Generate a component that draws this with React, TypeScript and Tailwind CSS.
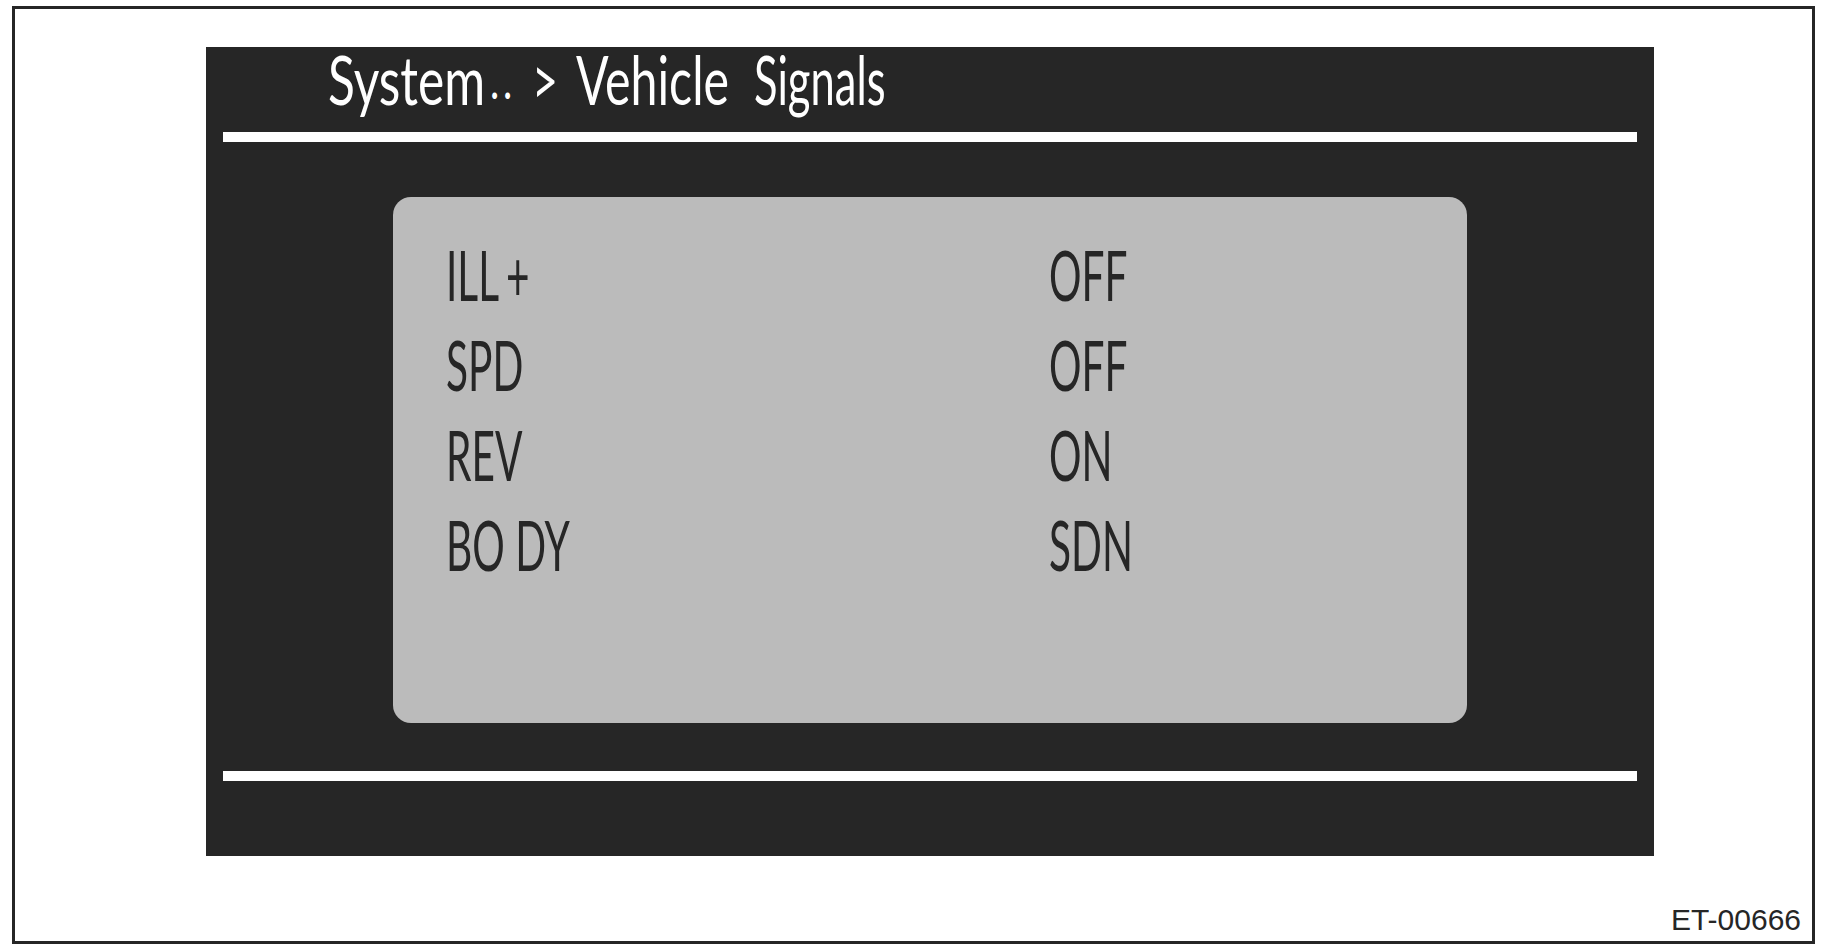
import React from 'react';

const rows = [
  { label: 'ILL', extra: '+', value: 'OFF' },
  { label: 'SPD', value: 'OFF' },
  { label: 'REV', value: 'ON' },
  { label: 'BO DY', value: 'SDN' },
];

export default function App() {
  return (
    <div className="w-[1827px] h-[951px] bg-white pt-[6px] pl-[12px] font-['Lato',sans-serif]">
      {/* Figure frame */}
      <div className="w-[1803px] h-[938px] border-[3px] border-[#262626] flex flex-col">
        {/* Screen */}
        <div className="ml-[191px] mt-[38px] w-[1448px] h-[809px] bg-[#262626] flex flex-col">
          {/* Breadcrumb title */}
          <div className="h-[64px] pl-[122px] flex items-start text-white text-[68px] leading-[64px] whitespace-nowrap">
            <div className="w-[162px]">
              <span className="block origin-left scale-x-[0.73]">System</span>
            </div>
            <div className="w-[42px]">
              <span className="block origin-left scale-x-[0.75] text-[52px] tracking-[5px]">..</span>
            </div>
            <div className="w-[44px]">
              <span className="block origin-left scale-x-[0.66]">&gt;</span>
            </div>
            <div className="w-[178px]">
              <span className="block origin-left scale-x-[0.71]">Vehicle</span>
            </div>
            <div className="w-[200px]">
              <span className="block origin-left scale-x-[0.64]">Signals</span>
            </div>
          </div>
          <div className="mt-[21px] mx-[17px] h-[10px] bg-white" />

          {/* Signal list */}
          <div className="mt-[55px] mx-[187px] h-[526px] rounded-[18px] bg-[#bbbbbb] pt-[32px] pl-[53px]">
            {rows.map((row) => (
              <div key={row.label} className="grid grid-cols-[603px_1fr] h-[90px] text-[70px] leading-[90px] text-[#262626]">
                <span className="block whitespace-nowrap origin-left scale-x-[0.58]">
                  {row.label}
                  {row.extra && <span className="ml-[12px]">{row.extra}</span>}
                </span>
                <span className="block whitespace-nowrap origin-left scale-x-[0.58]">{row.value}</span>
              </div>
            ))}
          </div>

          <div className="mt-[48px] mx-[17px] h-[10px] bg-white" />
        </div>

        <div className="mt-auto self-end mr-[11px] mb-[6px] text-[30px] leading-[30px] text-[#262626] font-['Liberation_Sans',Arial,sans-serif]">
          ET-00666
        </div>
      </div>
    </div>
  );
}
